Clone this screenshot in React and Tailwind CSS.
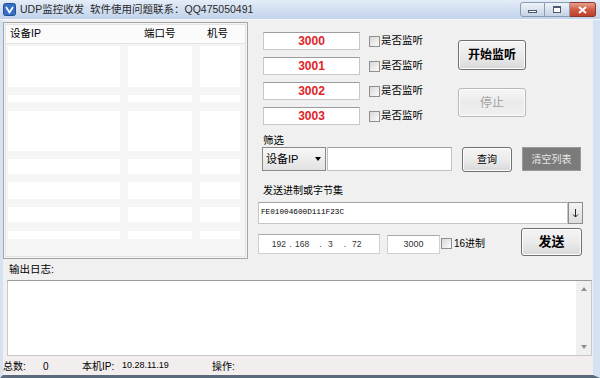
import React from "react";

// white bands of the list view: [white height, gap height]
const stripes = [
  [41, 8], [7, 9], [40, 8], [15, 8], [17, 8], [15, 9], [8, 17],
];

const ports = ["3000", "3001", "3002", "3003"];

const Checkbox = () => (
  <span className="inline-block w-[11px] h-[11px] border border-[#8e8f8f] bg-gradient-to-br from-[#d8d8d8] to-[#fbfbfb]" />
);

const Button = ({ children, className = "" }) => (
  <div
    className={
      "flex items-center justify-center rounded-[3px] border border-[#707070] bg-gradient-to-b from-[#f4f4f4] via-[#ebebeb] to-[#d9d9d9] shadow-[inset_0_0_0_1px_#fcfcfc] " +
      className
    }
  >
    {children}
  </div>
);

export default function App() {
  return (
    <div className="w-[600px] h-[378px] flex flex-col bg-[#f0f0f0] overflow-hidden text-[10px] text-black font-['Liberation_Sans','Noto_Sans_CJK_SC',sans-serif]">
      {/* 标题栏 */}
      <div className="h-[20px] shrink-0 flex items-start pl-[3px] bg-gradient-to-b from-[#e4edf8] to-[#c1d2ea] border-b border-[#f6f9fc]">
        <svg className="mt-[3px]" width="13" height="13" viewBox="0 0 13 13">
          <rect x="0.5" y="0.5" width="12" height="12" rx="2" fill="#3570c6" stroke="#1e4e96" />
          <path d="M3 4 L6.5 9.5 L10 4" stroke="#fff" strokeWidth="1.7" fill="none" />
        </svg>
        <span className="ml-[4px] mt-[3px] text-[10.5px] leading-[13px] text-[#2a2a2a] whitespace-pre">
          UDP监控收发  软件使用问题联系：QQ475050491
        </span>
        <div className="ml-auto mr-[4px] mt-[2px] flex">
          <div className="w-[25px] h-[15px] rounded-l-[3px] border border-[#8a9bb3] bg-gradient-to-b from-[#eef3f9] to-[#c6d3e4] flex items-center justify-center">
            <span className="block w-[9px] h-[3px] mt-[4px] bg-white border border-[#4a5a70]" />
          </div>
          <div className="w-[25px] h-[15px] border-y border-r border-[#8a9bb3] bg-gradient-to-b from-[#eef3f9] to-[#c6d3e4] flex items-center justify-center">
            <span className="block w-[8px] h-[7px] border border-[#4a5a70] border-t-2 bg-white" />
          </div>
          <div className="w-[26px] h-[15px] rounded-r-[3px] border-y border-r border-[#8a3a2c] bg-gradient-to-b from-[#e8a090] via-[#d05a44] to-[#c04028] flex items-center justify-center">
            <svg width="9" height="8" viewBox="0 0 9 8">
              <path d="M1 1 L8 7 M8 1 L1 7" stroke="#fff" strokeWidth="2" />
            </svg>
          </div>
        </div>
      </div>

      {/* 客户区 */}
      <div className="flex-1 flex flex-col border-l-[3px] border-l-[#d6e2f0] border-r-[7px] border-r-[#d3e3f4] border-b-[3px] border-b-[#5a6a7c]">
        <div className="h-[240px] flex">
          {/* 列表 */}
          <div className="mt-[2px] w-[245px] h-[237px] border border-[#a5a5a5] bg-[#f5f5f5] p-[1px]">
            <div className="h-full border border-[#e3e3e3] flex flex-col">
              <div className="h-[20px] flex items-center bg-[#fbfbfb] border-b border-[#e2e2e2] text-[10.5px]">
                <span className="w-[134px] pl-[4px]">设备IP</span>
                <span className="w-[67px] pl-[4px]">端口号</span>
                <span>机号</span>
              </div>
              <div className="mt-[2px] flex flex-col">
                {stripes.map(([w, g], i) => (
                  <div key={i}>
                    <div className="flex pl-[2px]" style={{ height: w }}>
                      <div className="w-[112px] bg-white" />
                      <div className="w-[64px] ml-[8px] bg-white" />
                      <div className="w-[40px] ml-[8px] bg-white" />
                    </div>
                    <div style={{ height: g }} />
                  </div>
                ))}
              </div>
            </div>
          </div>

          {/* 右侧面板 */}
          <div className="w-[345px] flex flex-col">
            <div className="h-[110px] flex">
              <div className="w-[210px] pl-[15px] pt-[12px] flex flex-col gap-[7px]">
                {ports.map((p) => (
                  <div key={p} className="flex items-center h-[18px]">
                    <div className="w-[97px] h-[18px] bg-white border border-[#c8c8c8] border-t-[#9c9c9c] flex items-center justify-center text-[12px] font-bold text-[#e0242a]">
                      {p}
                    </div>
                    <div className="ml-[9px] flex items-center gap-[1px]">
                      <Checkbox />
                      <span className="text-[10.5px]">是否监听</span>
                    </div>
                  </div>
                ))}
              </div>
              <div className="pt-[20px] flex flex-col">
                <Button className="w-[68px] h-[30px] text-[12px] font-bold">开始监听</Button>
                <Button className="mt-[18px] w-[68px] h-[29px] text-[12px] text-[#a3a3a3] border-[#b9b9b9] from-[#f6f6f6] to-[#f0f0f0]">
                  停止
                </Button>
              </div>
            </div>

            <div className="h-[17px] pl-[15px] pt-[5px] leading-[11px] text-[10.5px]">筛选</div>

            <div className="h-[24px] flex pl-[14px]">
              <div className="w-[64px] h-[24px] border border-[#8a8a8a] bg-gradient-to-b from-[#f7f7f7] to-[#e2e2e2] flex items-center pl-[3px] pr-[4px] text-[11px]">
                <span>设备IP</span>
                <span className="ml-auto w-0 h-0 border-l-[3px] border-r-[3px] border-t-[4px] border-l-transparent border-r-transparent border-t-black" />
              </div>
              <div className="w-[125px] ml-[1px] h-[24px] bg-white border border-[#c2c2c2] border-t-[#a0a0a0]" />
              <Button className="ml-[10px] w-[50px] h-[25px] text-[10px]">查询</Button>
              <div className="ml-[10px] w-[59px] h-[24px] bg-[#7b7b7b] border border-[#9a9a9a] flex items-center justify-center text-[10px] text-[#e6e6e6]">
                清空列表
              </div>
            </div>

            <div className="mt-[13px] h-[14px] pl-[15px] leading-[14px] text-[10px]">发送进制或字节集</div>

            <div className="mt-[4px] h-[22px] flex pl-[10px]">
              <div className="w-[310px] h-[22px] bg-white border border-[#c6c6c6] border-t-[#a4a4a4] flex items-center pl-[2px] font-['Liberation_Mono',monospace] text-[7.7px]">
                FE01004600D111F23C
              </div>
              <div className="w-[15px] h-[22px] border border-[#8c8c8c] bg-gradient-to-b from-[#f4f4f4] to-[#dcdcdc] flex items-center justify-center">
                <svg width="7" height="9" viewBox="0 0 7 9">
                  <path d="M3.5 0 V8 M1 5.5 L3.5 8 L6 5.5" stroke="#222" strokeWidth="1" fill="none" />
                </svg>
              </div>
            </div>

            <div className="mt-[4px] flex pl-[10px]">
              <div className="mt-[6px] w-[122px] h-[20px] bg-white border border-[#d0d0d0] border-t-[#a8a8a8] flex items-center text-[8.5px] text-[#333]">
                <span className="w-[27px] text-right">192</span>
                <span className="w-[9px] text-center">.</span>
                <span className="w-[18px]">168</span>
                <span className="w-[15px] text-center">.</span>
                <span className="w-[10px]">3</span>
                <span className="w-[14px] text-center">.</span>
                <span>72</span>
              </div>
              <div className="mt-[7px] ml-[7px] w-[53px] h-[19px] bg-white border border-[#d0d0d0] border-t-[#a8a8a8] flex items-center justify-center text-[9px] text-[#333]">
                3000
              </div>
              <div className="mt-[10px] ml-[1px] flex items-start gap-[2px]">
                <Checkbox />
                <span className="text-[10px] leading-[12px]">16进制</span>
              </div>
              <Button className="ml-[36px] w-[61px] h-[28px] text-[13px] font-bold">发送</Button>
            </div>
          </div>
        </div>

        {/* 输出日志 */}
        <div className="h-[20px] pl-[6px] flex items-center text-[10.5px]">输出日志:</div>
        <div className="ml-[4px] mr-[1px] h-[76px] bg-white border border-[#c8c8c8] border-t-[#9a9a9a] flex">
          <div className="flex-1" />
          <div className="w-[15px] bg-[#f0f0f0] flex flex-col items-center justify-between py-[6px]">
            <span className="w-0 h-0 border-l-[3px] border-r-[3px] border-b-[4px] border-l-transparent border-r-transparent border-b-[#909090]" />
            <span className="w-0 h-0 border-l-[3px] border-r-[3px] border-t-[4px] border-l-transparent border-r-transparent border-t-[#909090]" />
          </div>
        </div>

        {/* 状态栏 */}
        <div className="mt-[1px] h-[18px] flex items-center bg-[#f2eeee] text-[10px]">
          <span className="w-[40px]">总数:</span>
          <span className="w-[39px]">0</span>
          <span className="w-[40px]">本机IP:</span>
          <span className="w-[90px] text-[9px]">10.28.11.19</span>
          <span>操作:</span>
        </div>
      </div>
    </div>
  );
}
